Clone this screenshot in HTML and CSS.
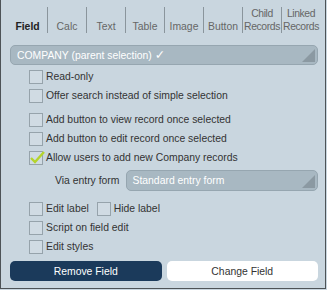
FILE: index.html
```html
<!DOCTYPE html>
<html lang="en">
<head>
    <meta charset="UTF-8">
    <meta name="viewport" content="width=device-width, initial-scale=1.0">
    <title>Field settings</title>
    <link rel="stylesheet" href="styles.css">
</head>
<body>
    <div class="panel">
        <nav class="tabs">
            <div class="tab active">Field</div>
            <div class="tab">Calc</div>
            <div class="tab">Text</div>
            <div class="tab">Table</div>
            <div class="tab">Image</div>
            <div class="tab">Button</div>
            <div class="tab two">Child<br>Records</div>
            <div class="tab two">Linked<br>Records</div>
        </nav>

        <div class="select main-select">
            <span class="select-text">COMPANY (parent selection) <span class="tick">&#10003;</span></span>
            <svg class="arrow" width="13" height="13" viewBox="0 0 13 13"><polygon points="0,13 13,0 13,13" /></svg>
        </div>

        <div class="group">
            <label class="check"><span class="box"></span>Read-only</label>
            <label class="check"><span class="box"></span>Offer search instead of simple selection</label>
        </div>

        <div class="group">
            <label class="check"><span class="box"></span>Add button to view record once selected</label>
            <label class="check"><span class="box"></span>Add button to edit record once selected</label>
            <label class="check"><span class="box checked"><svg width="16" height="14" viewBox="0 0 16 14"><polyline points="2,8 6,12 15,2" /></svg></span>Allow users to add new Company records</label>
            <div class="via-row">
                <span class="via-label">Via entry form</span>
                <div class="select">
                    <span class="select-text">Standard entry form</span>
                    <svg class="arrow" width="13" height="13" viewBox="0 0 13 13"><polygon points="0,13 13,0 13,13" /></svg>
                </div>
            </div>
        </div>

        <div class="group">
            <div class="check-pair">
                <label class="check"><span class="box"></span>Edit label</label>
                <label class="check"><span class="box"></span>Hide label</label>
            </div>
            <label class="check"><span class="box"></span>Script on field edit</label>
            <label class="check"><span class="box"></span>Edit styles</label>
        </div>

        <div class="actions">
            <button class="btn btn-dark">Remove Field</button>
            <button class="btn btn-light">Change Field</button>
        </div>
    </div>
</body>
</html>
```

FILE: styles.css
```css
body {
    font-family: "Liberation Sans", Arial, sans-serif;
    background-color: #c9d6df;
    color: #333;
    margin: 0;
    padding: 0;
}
.panel {
    box-sizing: border-box;
    width: 326px;
    height: 289px;
    padding: 0 7px 0 9px;
    background-color: #c9d6df;
    border: 1px solid #4d5357;
    border-top: none;
    font-size: 10.4px;
}
.tabs {
    display: grid;
    grid-template-columns: repeat(8, 39px);
    margin-left: -2px;
    padding-top: 7px;
}
.tab {
    box-sizing: border-box;
    height: 26px;
    display: flex;
    align-items: flex-end;
    justify-content: center;
    text-align: center;
    line-height: 12px;
    font-size: 10.4px;
    color: #666;
    white-space: nowrap;
}
.tab + .tab {
    border-left: 1px solid #8a959c;
}
.tab.active {
    font-weight: bold;
    color: #222;
}
.tab.two {
    line-height: 12.5px;
    letter-spacing: -0.4px;
}
.select {
    box-sizing: border-box;
    display: flex;
    align-items: center;
    height: 21px;
    background-color: #a8b8c2;
    border: 1px solid #96a6b0;
    border-radius: 5px;
    color: #fff;
    padding-left: 6px;
    flex: 1;
}
.select-text {
    flex: 1;
    line-height: 12px;
}
.tick {
    font-family: "DejaVu Sans", sans-serif;
    font-size: 12.5px;
}
.arrow {
    align-self: flex-end;
    margin: 0 2px 2px 0;
}
.arrow polygon {
    fill: #8b99a2;
}
.main-select {
    margin-top: 12px;
    margin-bottom: 2px;
    height: 20px;
}
.group {
    padding-left: 19px;
    margin-bottom: 5px;
}
.check {
    display: flex;
    align-items: center;
    height: 19px;
    color: #333;
}
.box {
    box-sizing: border-box;
    width: 14px;
    height: 14px;
    margin-right: 3px;
    border: 1px solid #96a3ab;
    background-color: #d0dbe3;
    position: relative;
}
.box svg {
    position: absolute;
    left: -1px;
    top: -2px;
}
.box polyline {
    fill: none;
    stroke: #b4d42c;
    stroke-width: 2.4;
}
.check-pair {
    display: flex;
    gap: 8px;
}
.via-row {
    display: flex;
    align-items: center;
    padding: 3px 0 3px 26px;
    gap: 6px;
}
.via-label {
    color: #333;
}
.actions {
    display: grid;
    grid-template-columns: 1fr 1fr;
    gap: 5px;
    margin-top: 5px;
}
.btn {
    height: 20px;
    border: none;
    border-radius: 5px;
    font-family: "Liberation Sans", Arial, sans-serif;
    font-size: 10.4px;
    padding: 0;
}
.btn-dark {
    background-color: #1b3a5b;
    color: #fff;
}
.btn-light {
    background-color: #fff;
    color: #333;
}
```
